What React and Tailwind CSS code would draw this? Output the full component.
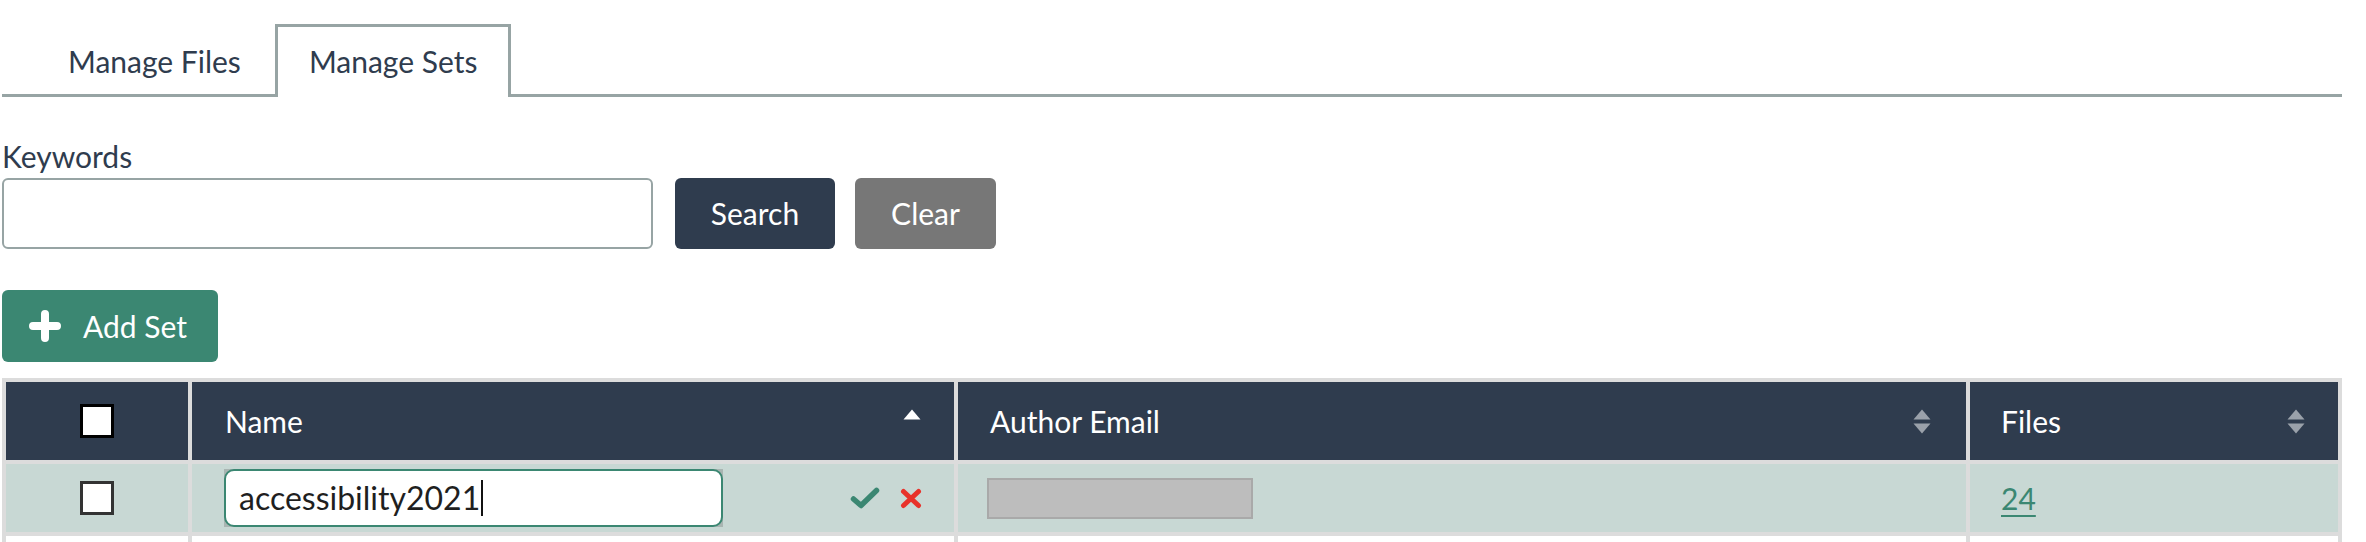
import React from 'react';

const SortIcon = ({ up = false }) => (
  <svg width="18" height="25" viewBox="0 0 18 25" className="shrink-0">
    {up ? (
      <path d="M9 0.5 L17.5 10.5 H0.5 Z" fill="#ffffff" />
    ) : (
      <>
        <path d="M9 0.5 L17.5 10.5 H0.5 Z" fill="#9aa1aa" />
        <path d="M0.5 14.5 H17.5 L9 24.5 Z" fill="#9aa1aa" />
      </>
    )}
  </svg>
);

export default function App() {
  return (
    <div className="min-h-screen bg-white pl-[2px] pr-[24px] pt-[24px] text-[#2f3c4e] font-['Lato',sans-serif]">
      {/* Tabs */}
      <div className="flex items-end border-b-[3px] border-[#97a4a4] pl-[32px]">
        <div className="h-[70px] px-[34px] pt-[4px] flex items-center text-[30px]">Manage Files</div>
        <div className="-mb-[3px] h-[73px] px-[31px] pt-[1px] pb-[3px] flex items-center border-[3px] border-b-0 border-[#97a4a4] bg-white text-[30px]">
          Manage Sets
        </div>
      </div>

      {/* Search */}
      <label className="block mt-[42px] mb-[5px] text-[30px] leading-[34px]">Keywords</label>
      <div className="flex">
        <input className="w-[651px] h-[71px] border-2 border-[#97a4a4] rounded-[6px] outline-none px-3" />
        <button className="ml-[22px] w-[160px] h-[71px] bg-[#2f3c4e] text-white text-[30px] rounded-[6px]">Search</button>
        <button className="ml-[20px] w-[141px] h-[71px] bg-[#777777] text-white text-[30px] rounded-[6px]">Clear</button>
      </div>

      {/* Add set */}
      <button className="mt-[41px] w-[216px] h-[72px] bg-[#3b8772] text-white rounded-[6px] flex items-center pl-[26px] gap-[21px] text-[30px]">
        <svg width="34" height="34" viewBox="0 0 34 34">
          <path d="M17 5 V29 M5 17 H29" stroke="#ffffff" strokeWidth="8" strokeLinecap="round" />
        </svg>
        Add Set
      </button>

      {/* Table */}
      <table className="mt-[16px] w-full table-fixed border-separate border-spacing-[4px] bg-[#dcdcdc]">
        <thead>
          <tr className="h-[78px] bg-[#2f3c4e] text-white text-[30px]">
            <th className="w-[182px] p-0 font-normal">
              <div className="mx-auto w-[34px] h-[34px] border-[3px] border-black bg-white" />
            </th>
            <th className="w-[762px] pl-[33px] pr-[33px] font-normal text-left">
              <div className="flex items-center justify-between">
                <span>Name</span>
                <SortIcon up />
              </div>
            </th>
            <th className="w-[1008px] pl-[32px] pr-[35px] font-normal text-left">
              <div className="flex items-center justify-between">
                <span>Author Email</span>
                <SortIcon />
              </div>
            </th>
            <th className="pl-[31px] pr-[33px] font-normal text-left">
              <div className="flex items-center justify-between">
                <span>Files</span>
                <SortIcon />
              </div>
            </th>
          </tr>
        </thead>
        <tbody>
          <tr className="h-[68px] bg-[#c8d8d4]">
            <td className="p-0">
              <div className="mx-auto w-[34px] h-[34px] border-[3px] border-[#333333] bg-white" />
            </td>
            <td className="pl-[32px] pr-[32px]">
              <div className="flex items-center">
                <div className="w-[499px] h-[58px] bg-[#a9b5b2]">
                  <div className="h-full rounded-[10px] border-2 border-[#3b8772] bg-white flex items-center pl-[13px] text-[32px] text-[#1f1f1f]">
                    accessibility2021
                    <span className="inline-block w-[2px] h-[36px] bg-[#111] ml-[1px]" />
                  </div>
                </div>
                <div className="ml-auto flex items-center gap-[20px]">
                  <svg width="30" height="22" viewBox="0 0 30 22">
                    <path d="M3.5 12 L11 18.5 L26.5 3.5" fill="none" stroke="#3b8772" strokeWidth="5.5" strokeLinecap="round" strokeLinejoin="round" />
                  </svg>
                  <svg width="22" height="21" viewBox="0 0 22 21">
                    <path d="M3.5 3.5 L18.5 17.5 M18.5 3.5 L3.5 17.5" stroke="#e8322a" strokeWidth="5" strokeLinecap="round" />
                  </svg>
                </div>
              </div>
            </td>
            <td className="pl-[29px]">
              <div className="w-[266px] h-[41px] bg-[#bdbdbd] border-2 border-[#a9a9a9]" />
            </td>
            <td className="pl-[31px]">
              <a href="#" className="text-[30px] text-[#3b8772] underline decoration-2 underline-offset-[5px]">24</a>
            </td>
          </tr>
          <tr className="h-[68px] bg-white">
            <td />
            <td />
            <td />
            <td />
          </tr>
        </tbody>
      </table>
    </div>
  );
}
